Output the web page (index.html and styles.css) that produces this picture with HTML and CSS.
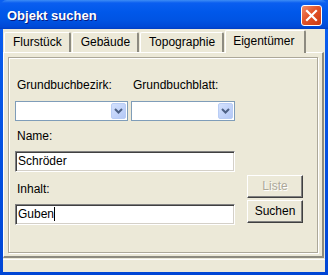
FILE: index.html
```html
<!DOCTYPE html>
<html lang="de">
<head>
  <meta charset="UTF-8">
  <title>Objekt suchen</title>
  <link rel="stylesheet" href="styles.css">
</head>
<body>
  <div class="window">
    <div class="titlebar">
      <span class="title">Objekt suchen</span>
      <div class="close">
        <svg width="13" height="13" viewBox="0 0 13 13">
          <path d="M2 2 L11 11 M11 2 L2 11" stroke="#fff" stroke-width="2.2" stroke-linecap="square" fill="none"/>
        </svg>
      </div>
    </div>

    <div class="client">
      <div class="tabs">
        <div class="tab">Flurstück</div>
        <div class="tab">Gebäude</div>
        <div class="tab">Topographie</div>
        <div class="tab active">Eigentümer</div>
      </div>

      <div class="tabpane">
        <div class="panel">
          <div class="form">
            <div class="row labels">
              <span class="label w1">Grundbuchbezirk:</span>
              <span class="label">Grundbuchblatt:</span>
            </div>
            <div class="row combos">
              <div class="combo w1"><span class="arrow"><svg width="9" height="6" viewBox="0 0 9 6"><path d="M1 1 L4.5 4.5 L8 1" stroke="#4d6185" stroke-width="2" fill="none"/></svg></span></div>
              <div class="combo w2"><span class="arrow"><svg width="9" height="6" viewBox="0 0 9 6"><path d="M1 1 L4.5 4.5 L8 1" stroke="#4d6185" stroke-width="2" fill="none"/></svg></span></div>
            </div>
            <span class="label name-label">Name:</span>
            <div class="field">Schröder</div>
            <span class="label inhalt-label">Inhalt:</span>
            <div class="field">Guben<span class="caret"></span></div>
          </div>
          <div class="buttons">
            <div class="btn disabled">Liste</div>
            <div class="btn">Suchen</div>
          </div>
        </div>
      </div>

      <div class="statusbar"></div>
    </div>
  </div>
</body>
</html>
```

FILE: styles.css
```css
body {
  margin: 0;
  font-family: "Liberation Sans", Arial, sans-serif;
  font-size: 12px;
  color: #000;
}

.window {
  width: 328px;
  height: 275px;
  display: flex;
  flex-direction: column;
  background: linear-gradient(#0a5ff0, #0046d5);
}

.titlebar {
  height: 29px;
  flex: none;
  display: flex;
  align-items: center;
  justify-content: space-between;
  padding: 0 6px 0 7px;
  background: linear-gradient(#3d8cf5 0, #0a5ef0 3px, #0058ea 12px, #0054e3 20px, #0049d6 27px, #003dc2 29px);
  border-radius: 7px 7px 0 0;
}

.title {
  color: #fff;
  font-weight: bold;
  font-size: 13px;
  text-shadow: 1px 1px #0a1a80;
  margin-top: 1px;
}

.close {
  width: 19px;
  height: 19px;
  display: flex;
  align-items: center;
  justify-content: center;
  background: linear-gradient(135deg, #f08d6c, #e35429 45%, #cc3a12);
  border: 1px solid #fff;
  border-radius: 3px;
  margin-top: 1px;
}

.client {
  flex: 1;
  margin: 0 3px 3px 3px;
  background: #ece9d8;
  display: flex;
  flex-direction: column;
}

.tabs {
  height: 23px;
  display: flex;
  align-items: flex-end;
  padding-left: 1px;
}

.tab {
  height: 19px;
  line-height: 19px;
  padding: 0 7px 0 8px;
  border-top: 1px solid #fff;
  border-left: 1px solid #fff;
  border-right: 2px solid #8d8b80;
  border-radius: 2px 2px 0 0;
  margin-right: 1px;
}

.tab.active {
  height: 22px;
  line-height: 21px;
  padding: 0 9px 0 7px;
  margin-bottom: -1px;
  background: #ece9d8;
  position: relative;
}

.tabpane {
  flex: none;
  height: 196px;
  margin: 0 1px 0 0;
  border-top: 1px solid #fff;
  border-left: 1px solid #fff;
  border-right: 2px solid #8d8b80;
  border-bottom: 2px solid #8d8b80;
  padding: 4px 4px 3px 4px;
}

.panel {
  height: 100%;
  box-sizing: border-box;
  border: 1px solid #aca899;
  box-shadow: 1px 1px #fff, inset 1px 1px #fff;
  padding: 20px 0 0 6px;
  display: flex;
}

.form {
  width: 220px;
  display: flex;
  flex-direction: column;
}

.row {
  display: flex;
  gap: 3px;
}

.label {
  height: 14px;
  line-height: 14px;
  padding-left: 2px;
}

.w1 { width: 111px; }
.w2 { width: 102px; }

.combos {
  margin-top: 9px;
}

.combo {
  height: 18px;
  background: #fff;
  border: 1px solid #7f9db9;
  position: relative;
}

.arrow {
  position: absolute;
  right: 1px;
  top: 1px;
  width: 15px;
  height: 16px;
  box-sizing: border-box;
  border: 1px solid #b9cdf5;
  border-radius: 2px;
  background: linear-gradient(135deg, #d3e1fd, #b4c8f6);
  display: flex;
  align-items: center;
  justify-content: center;
}

.name-label {
  margin-top: 8px;
}

.inhalt-label {
  margin-top: 10px;
}

.field {
  margin-top: 8px;
  height: 19px;
  line-height: 19px;
  padding-left: 2px;
  background: #fff;
  border-top: 1px solid #808080;
  border-left: 1px solid #808080;
  border-bottom: 1px solid #fff;
  border-right: 1px solid #fff;
  box-shadow: inset 1px 1px #404040, inset -1px -1px #d4d0c8;
}

.caret {
  display: inline-block;
  width: 1px;
  height: 14px;
  background: #000;
  vertical-align: -3px;
}

.buttons {
  margin-left: 12px;
  padding-top: 97px;
  display: flex;
  flex-direction: column;
  gap: 2px;
}

.btn {
  width: 54px;
  height: 21px;
  line-height: 21px;
  text-align: center;
  border-top: 1px solid #fff;
  border-left: 1px solid #fff;
  border-bottom: 1px solid #404040;
  border-right: 1px solid #404040;
  box-shadow: inset -1px -1px #808080;
}

.btn.disabled {
  color: #aca899;
  text-shadow: 1px 1px #fff;
}

.statusbar {
  flex: 1;
  border-top: 1px solid #fff;
  margin-top: 1px;
}
```
